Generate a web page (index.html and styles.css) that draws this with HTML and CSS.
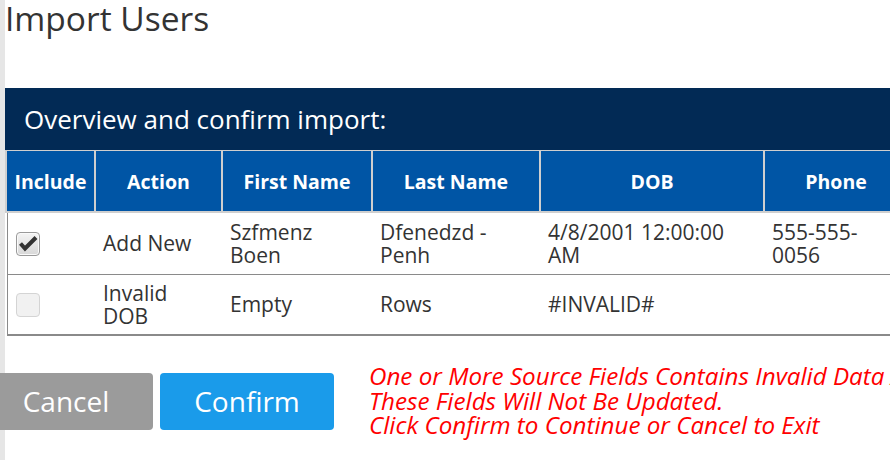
FILE: index.html
```html
<!DOCTYPE html>
<html lang="en">
<head>
<meta charset="utf-8">
<title>Import Users</title>
<link rel="stylesheet" href="styles.css">
</head>
<body>
<div class="page">
  <h1 class="title">Import Users</h1>
  <section class="panel">
    <h2 class="panel-title">Overview and confirm import:</h2>
    <table class="grid">
      <colgroup>
        <col class="c-include"><col class="c-action"><col class="c-first"><col class="c-last"><col class="c-dob"><col class="c-phone"><col class="c-email">
      </colgroup>
      <thead>
        <tr><th>Include</th><th>Action</th><th>First Name</th><th>Last Name</th><th>DOB</th><th>Phone</th><th>Email</th></tr>
      </thead>
      <tbody>
        <tr>
          <td><span class="check is-on"><svg viewBox="0 0 24 24" width="24" height="24"><polyline points="4.5,11.5 9,16.5 20,5.5" fill="none" stroke="#333" stroke-width="4"/></svg></span></td>
          <td>Add New</td><td>Szfmenz Boen</td><td>Dfenedzd - Penh</td><td>4/8/2001 12:00:00 AM</td><td>555-555-0056</td><td></td>
        </tr>
        <tr>
          <td><span class="check is-off"></span></td>
          <td>Invalid DOB</td><td>Empty</td><td>Rows</td><td>#INVALID#</td><td></td><td></td>
        </tr>
      </tbody>
    </table>
  </section>
  <div class="actions">
    <button class="btn btn-cancel" type="button">Cancel</button>
    <button class="btn btn-confirm" type="button">Confirm</button>
    <p class="warning">One or More Source Fields Contains Invalid Data And<br>These Fields Will Not Be Updated.<br>Click Confirm to Continue or Cancel to Exit</p>
  </div>
</div>
</body>
</html>
```

FILE: styles.css
```css
html, body {
  margin: 0;
  padding: 0;
  overflow: hidden;
  background: #e6e6e6;
}
body {
  font-family: "Open Sans", "DejaVu Sans", sans-serif;
  color: #333;
}
.page {
  margin-left: 5px;
  background: #fff;
  min-height: 460px;
}
.title {
  margin: 0 0 52px 0;
  font-size: 33.5px;
  line-height: 36px;
  font-weight: 400;
  color: #333;
}
.panel {
  background: #fff;
}
.panel-title {
  margin: 0;
  height: 62px;
  padding-left: 19px;
  display: flex;
  align-items: center;
  background: #022a55;
  color: #fff;
  font-size: 26px;
  font-weight: 400;
}
.grid {
  margin-left: 2px;
  border-collapse: separate;
  border-spacing: 0;
  table-layout: fixed;
  width: 1000px;
  font-size: 21px;
  line-height: 23px;
}
.c-include { width: 89px; }
.c-action { width: 127px; }
.c-first { width: 150px; }
.c-last { width: 168px; }
.c-dob { width: 224px; }
.c-phone { width: 144px; }
.c-email { width: 98px; }
.grid th {
  box-sizing: border-box;
  height: 63px;
  padding: 0 2px;
  background: #0055a5;
  color: #fff;
  font-size: 19.5px;
  font-weight: 700;
  text-align: center;
  border-top: 1px solid #cfcfcf;
  border-right: 2px solid #cfcfcf;
  border-bottom: 2px solid #cfcfcf;
  white-space: nowrap;
}
.grid th:first-child {
  box-shadow: -2px 0 0 #cfcfcf;
}
.grid td {
  box-sizing: border-box;
  height: 62px;
  padding: 0 7px 0 7px;
  border-bottom: 1px solid #8a8a8a;
  vertical-align: middle;
}
.grid tbody tr:last-child td {
  height: 61px;
  border-bottom-width: 2px;
}
.grid td:first-child {
  border-left: 1px solid #8a8a8a;
  padding-left: 8px;
}
.check {
  display: flex;
  align-items: center;
  justify-content: center;
  box-sizing: border-box;
  width: 24px;
  height: 24px;
  border-radius: 4px;
  margin-top: 1px;
}
.check svg {
  flex: none;
}
.check.is-on {
  border: 1px solid #9a9a9a;
  background: linear-gradient(#f4f4f4, #d8d8d8);
  box-shadow: inset 0 0 0 1px #fafafa;
}
.check.is-off {
  border: 1px solid #d4d4d4;
  background: #f1f1f1;
}
.actions {
  display: flex;
  align-items: center;
  margin-top: 28px;
  margin-left: -26px;
}
.btn {
  box-sizing: border-box;
  width: 174px;
  height: 57px;
  border: 0;
  border-radius: 4px;
  font-family: "Open Sans", "DejaVu Sans", sans-serif;
  font-size: 28px;
  color: #fff;
  padding: 0;
  flex: none;
}
.btn-cancel {
  background: #9b9b9b;
}
.btn-confirm {
  margin-left: 7px;
  background: #1a9bea;
}
.warning {
  margin: 0 0 1px 35px;
  color: #ff0000;
  font-style: italic;
  font-size: 24.2px;
  line-height: 24.5px;
  white-space: nowrap;
}
```
